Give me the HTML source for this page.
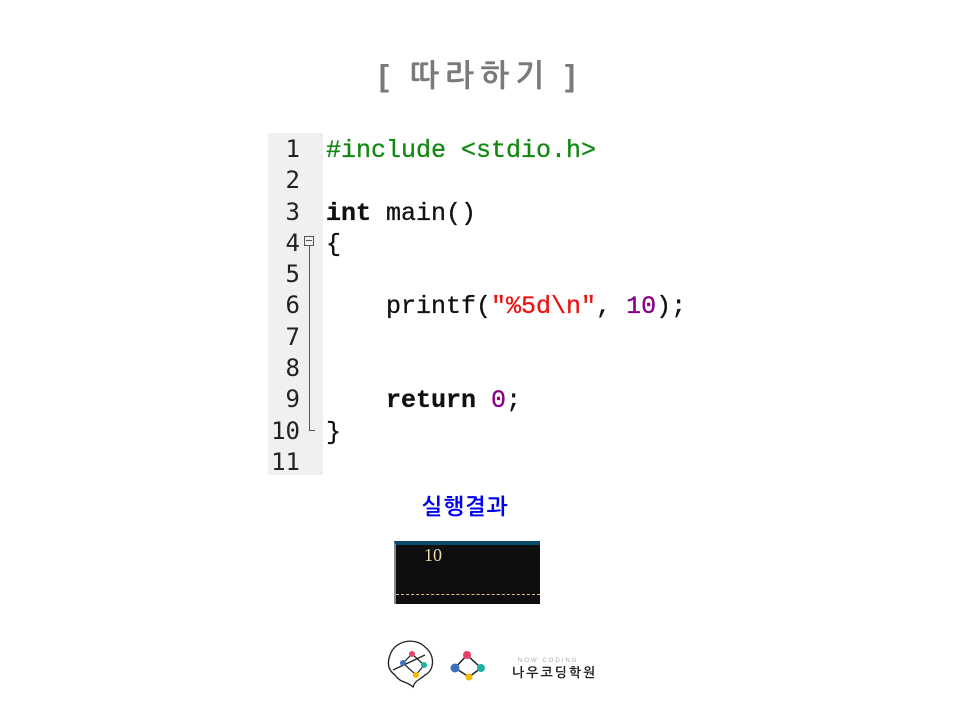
<!DOCTYPE html>
<html><head><meta charset="utf-8"><style>
body{margin:0;width:960px;height:720px;background:#fff;position:relative;overflow:hidden;font-family:"Liberation Sans","NanumGothic",sans-serif}
.t{position:absolute;left:0;width:960px;text-align:center;top:58px;font-size:31px;font-weight:bold;color:#7a7a7a;letter-spacing:6px}
.g{position:absolute;left:268px;top:133px;width:55px;height:342px;background:#f0f0f0}
.ln{position:absolute;font-family:"DejaVu Sans Mono",monospace;font-size:24px;line-height:31.3px;color:#222;white-space:pre}
.code{position:absolute;left:326px;top:135px;font-family:"Liberation Mono",monospace;font-size:25px;line-height:31.3px;color:#111;white-space:pre;-webkit-text-stroke:0.3px}
.gr{color:#118811}.rd{color:#ee1111}.pu{color:#880088}b{font-weight:bold}
</style></head><body>
<div class="t">[ 따라하기 ]</div>
<div class="g"></div>
<div class="ln" style="left:264px;top:134px;width:36px;text-align:right">1
2
3
4
5
6
7
8
9
10
11</div>
<div style="position:absolute;left:304px;top:236px;width:10px;height:10px;border:1px solid #555;box-sizing:border-box"></div>
<div style="position:absolute;left:306px;top:240px;width:6px;height:1px;background:#555"></div>
<div style="position:absolute;left:309px;top:246px;width:1px;height:184px;background:#555"></div>
<div style="position:absolute;left:309px;top:430px;width:6px;height:1px;background:#555"></div>
<div class="code"><span class="gr">#include &lt;stdio.h&gt;</span>

<b>int</b> main()
{

    printf(<span class="rd">"%5d\n"</span>, <span class="pu">10</span>);


    <b>return</b> <span class="pu">0</span>;
}</div>
<div style="position:absolute;left:0;width:930px;text-align:center;top:494px;font-size:22px;font-weight:bold;color:#0000ee;letter-spacing:1px">실행결과</div>
<div style="position:absolute;left:394px;top:541px;width:146px;height:63px;background:#0e0e0e;border-top:4px solid #0b4a6a;border-left:2px solid #889;box-sizing:border-box"></div>
<div style="position:absolute;left:424px;top:545px;font-family:'Liberation Serif',serif;font-size:18px;color:#f0d8b0">10</div>
<div style="position:absolute;left:396px;top:594px;width:144px;border-top:1px dashed #e0c090"></div>
<svg style="position:absolute;left:385px;top:635px" width="220" height="60">
<path d="M5 20 C10 5 30 2 40 12 C50 20 50 35 40 40 C35 45 30 45 28 52 C22 46 15 48 10 40 C3 35 2 28 5 20 Z M8 35 L40 20" fill="none" stroke="#222" stroke-width="1.3"/>
<path d="M18 28 L27 19 L39 30 L31 40 Z" fill="none" stroke="#222" stroke-width="1.2"/>
<circle cx="27" cy="19" r="3" fill="#e8406a"/><circle cx="39" cy="30" r="3" fill="#20b0a0"/><circle cx="31" cy="40" r="3" fill="#f5b800"/><circle cx="18" cy="28" r="3" fill="#3a70c0"/>
<path d="M82 20 L96 33 L84 42 L70 33 Z" stroke="#222" stroke-width="1.5" fill="none"/>
<circle cx="82" cy="20" r="4" fill="#e8406a"/><circle cx="96" cy="33" r="4" fill="#20b0a0"/><circle cx="84" cy="42" r="3.5" fill="#f5b800"/><circle cx="70" cy="33" r="4.5" fill="#3a70c0"/>
<text x="133" y="27" font-size="6" fill="#aaa" letter-spacing="2" font-family="Liberation Sans">NOW CODING</text>
<text x="127" y="42" font-size="13" font-weight="bold" fill="#222" letter-spacing="2" font-family="NanumGothic,sans-serif">나우코딩학원</text>
</svg>
</body></html>
